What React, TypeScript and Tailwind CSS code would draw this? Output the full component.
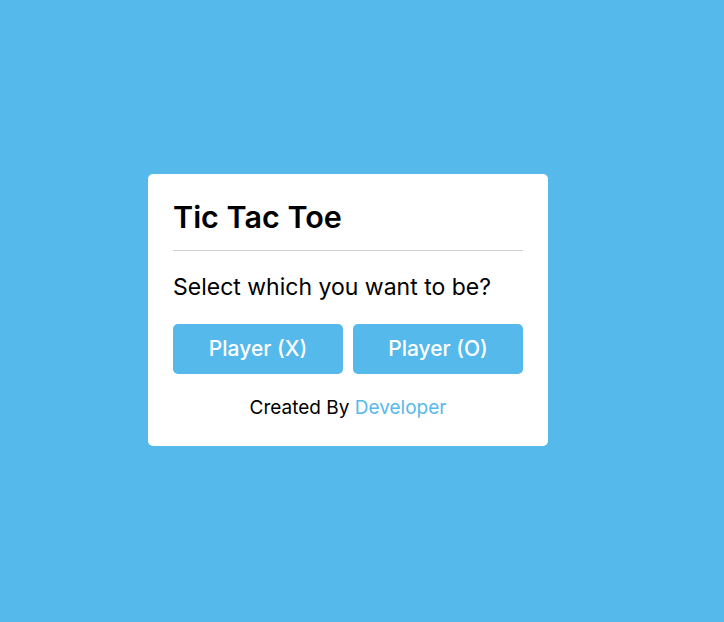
export default function App() {
  const font = { fontFamily: 'Inter, "Open Sans", "Liberation Sans", sans-serif' };
  return (
    <div className="w-[724px] h-[622px] bg-[#56b9eb] flex items-center justify-center pr-[28px] pb-[2px]" style={font}>
      <div className="w-[400px] bg-white rounded-[5px] pt-[20px] px-[25px] pb-[25px]">
        <div className="text-[30.5px] leading-[45px] font-semibold text-black pb-[11px] border-b border-[#d3d3d3]">Tic Tac Toe</div>
        <div className="mt-[20px] text-[23px] leading-[32px] font-normal text-black">Select which you want to be?</div>
        <div className="mt-[21px] flex gap-[10px]">
          <button className="flex-1 h-[50px] rounded-[5px] bg-[#56b9eb] text-white text-[21px] font-medium">Player (X)</button>
          <button className="flex-1 h-[50px] rounded-[5px] bg-[#56b9eb] text-white text-[21px] font-medium">Player (O)</button>
        </div>
        <div className="mt-[20px] text-center text-[19px] leading-[27px] text-black">
          Created By <span className="text-[#56b9eb]">Developer</span>
        </div>
      </div>
    </div>
  );
}
